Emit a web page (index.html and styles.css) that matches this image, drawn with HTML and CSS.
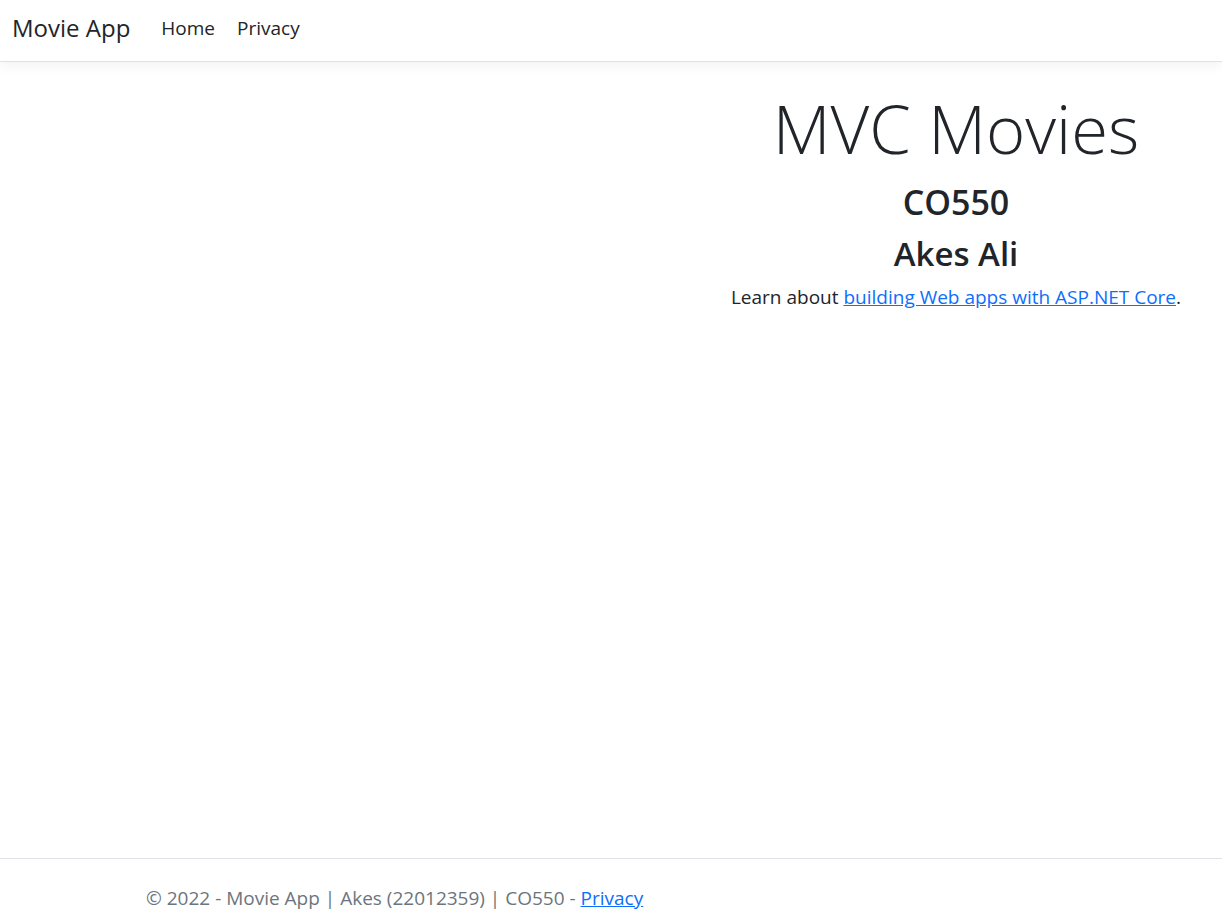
FILE: index.html
```html
<!DOCTYPE html>
<html lang="en">
<head>
<meta charset="utf-8">
<title>Movie App</title>
<link rel="stylesheet" href="styles.css">
</head>
<body>
<div class="page">
  <header class="navbar">
    <a class="brand" href="#">Movie App</a>
    <nav class="nav">
      <a class="nav-link" href="#">Home</a>
      <a class="nav-link" href="#">Privacy</a>
    </nav>
  </header>
  <main class="main">
    <div class="spacer"></div>
    <section class="hero">
      <h1 class="display">MVC Movies</h1>
      <h3 class="course">CO550</h3>
      <h2 class="name">Akes Ali</h2>
      <p class="lead">Learn about <a href="#">building Web apps with ASP.NET Core</a>.</p>
    </section>
  </main>
  <footer class="footer">
    <div class="footer-inner">© 2022 - Movie App | Akes (22012359) | CO550 - <a href="#">Privacy</a></div>
  </footer>
</div>
</body>
</html>
```
FILE: styles.css
```css
* { box-sizing: border-box; }
html, body { margin: 0; padding: 0; height: 100%; }
body {
  font-family: "Open Sans", "Noto Sans", "Liberation Sans", sans-serif;
  color: #212529;
  background: #fff;
  font-size: 19px;
}
.page {
  display: flex;
  flex-direction: column;
  min-height: 919px;
}
a { color: #0d6efd; }
.navbar {
  height: 62px;
  display: flex;
  align-items: center;
  padding: 0 12px 6px;
  border-bottom: 1px solid #dee2e6;
  box-shadow: 0 4px 12px rgba(0,0,0,0.05);
  background: #fff;
  position: relative;
  z-index: 1;
}
.brand {
  color: #212529;
  text-decoration: none;
  font-size: 24px;
  margin-right: 20px;
}
.nav { display: flex; gap: 0; }
.nav-link {
  color: #212529;
  text-decoration: none;
  font-size: 19px;
  padding: 0 11px;
}
.main {
  flex: 1;
  display: flex;
}
.spacer { flex: 0 0 690px; }
.hero {
  flex: 1;
  text-align: center;
  padding-top: 26px;
}
.display {
  font-size: 67px;
  font-weight: 300;
  margin: 0;
  line-height: 1.2;
}
.course {
  font-size: 34px;
  font-weight: 600;
  margin: 14px 0 0;
  line-height: 1.2;
}
.name {
  font-size: 33px;
  font-weight: 600;
  margin: 11px 0 0;
  line-height: 1.2;
}
.lead {
  margin: 9px 0 0;
  font-size: 19px;
  line-height: 1.5;
}
.footer {
  border-top: 1px solid #dee2e6;
  height: 61px;
  color: #6c757d;
}
.footer-inner {
  padding-left: 146px;
  line-height: 78px;
  font-size: 19px;
}
```
